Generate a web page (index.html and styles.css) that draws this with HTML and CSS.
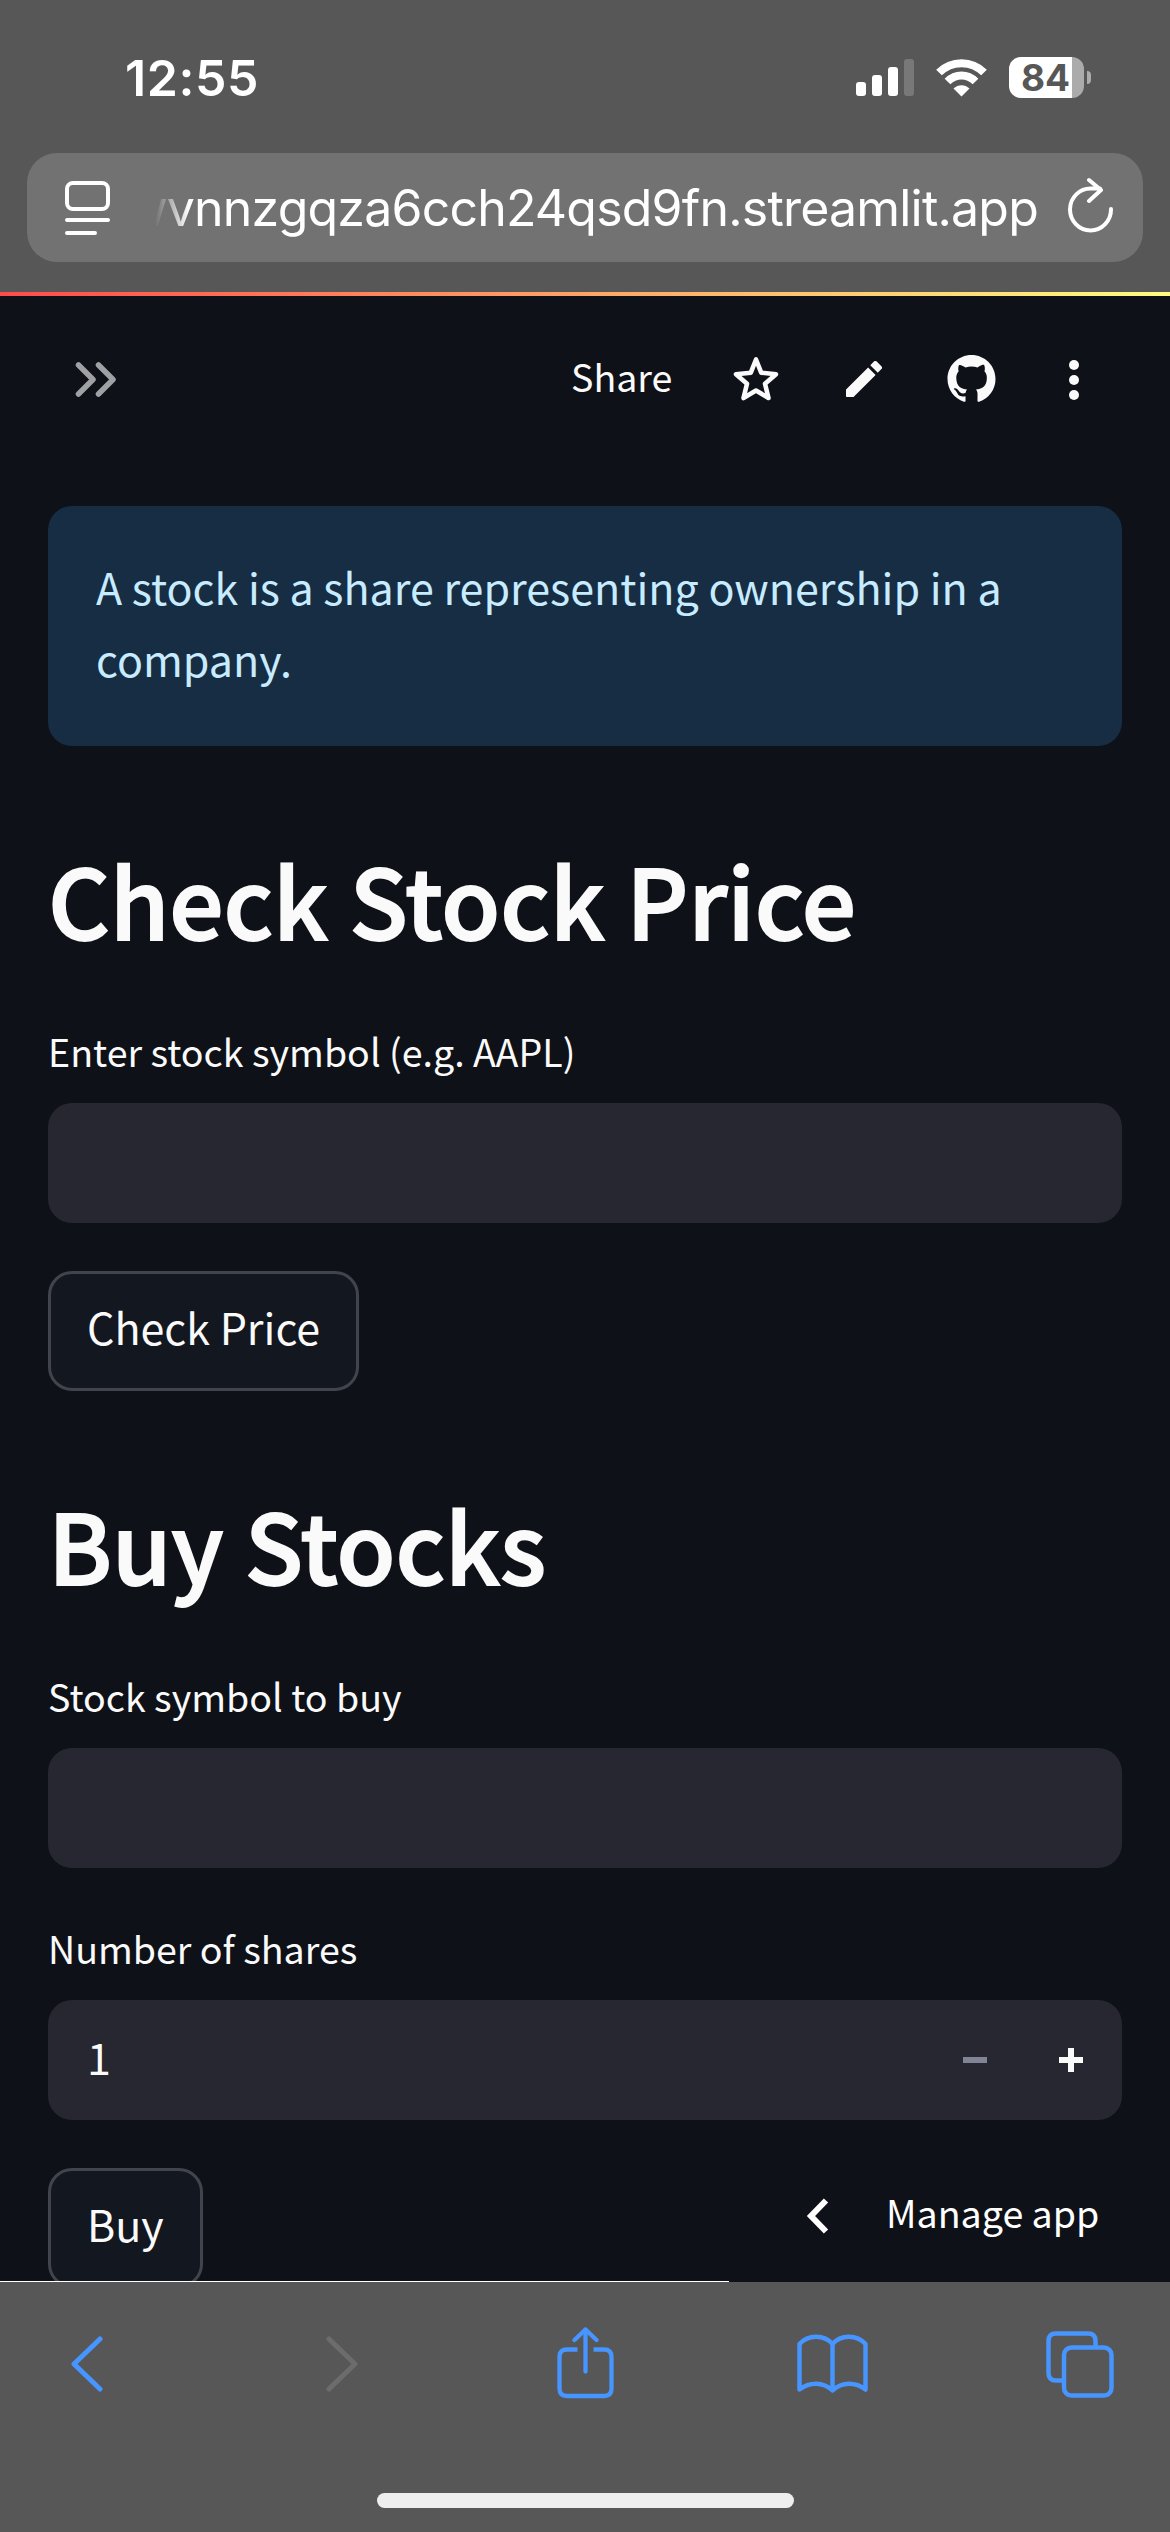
FILE: index.html
```html
<!DOCTYPE html>
<html lang="en">
<head>
<meta charset="utf-8">
<title>Stock app</title>
<link rel="stylesheet" href="styles.css">
</head>
<body>
<div class="phone">
  <div class="browser-top">
    <div class="status">
      <span class="time">12:55</span>
      <div class="indicators">
        <svg class="signal" width="58" height="38" viewBox="0 0 58 38" fill="#fff"><rect y="23" width="10" height="14" rx="3"/><rect x="16" y="16" width="10" height="21" rx="3"/><rect x="32" y="8" width="10" height="29" rx="3"/><rect x="48" width="10" height="37" rx="3" opacity=".2"/></svg>
        <svg class="wifi" width="51" height="38" viewBox="0 0 51 38" fill="none" stroke="#fff"><path stroke-width="8" d="M3 13.5C15.500 1 35.500 1 48 13.500"/><path stroke-width="8" d="M11.500 22.500C19.500 14.500 31.500 14.500 39.500 22.500"/><path fill="#fff" stroke="none" d="M17.500 29.500C22 25 29 25 33.500 29.500L25.500 37.500Z"/></svg>
        <div class="battery"><span class="level">84</span></div>
        <span class="battery-tip"></span>
      </div>
    </div>
    <div class="address">
      <svg class="page-icon" width="46" height="56" viewBox="0 0 46 56" fill="none" stroke="#fff" stroke-width="4" stroke-linecap="round"><rect x="2" y="2" width="41" height="26" rx="6"/><path d="M2 39H43M2 52H30"/></svg>
      <div class="url"><span>wvnnzgqza6cch24qsd9fn.streamlit.app</span></div>
      <svg class="reload" width="46" height="56" viewBox="0 0 46 56" fill="none" stroke="#fff" stroke-width="4" stroke-linecap="round" stroke-linejoin="round"><path d="M43 32A20.500 21 0 1 1 23.500 11.500H32M21 3L33 13L21 24"/></svg>
    </div>
  </div>

  <div class="app">
    <div class="decoration"></div>
    <header class="toolbar">
      <svg class="expand" width="42" height="36" viewBox="0 0 42 36" fill="none" stroke="#a0a1a4" stroke-width="5.500" stroke-linecap="round" stroke-linejoin="round"><path d="M3.500 3L18 17.500L3.500 32M23.500 3L38 17.500L23.500 32"/></svg>
      <nav class="actions">
        <span class="share">Share</span>
        <svg class="star" width="48" height="48" viewBox="0 0 48 48" fill="none" stroke="#fafafa" stroke-width="4.600" stroke-linejoin="round"><path d="M24 4.500L29.200 17.700L44 19.300L33 28.700L36.500 43L24 35.500L11.500 43L15 28.700L4 19.300L18.800 17.700Z"/></svg>
        <svg class="pencil" width="36" height="36" viewBox="3 3 18 18" fill="#fafafa"><path d="M3 17.460v3.040c0 .28.220.500.500.500h3.040c.130 0 .26-.050.350-.150L17.810 9.940l-3.750-3.750L3.150 17.100c-.1.100-.15.220-.15.360zM20.710 7.040a.996.996 0 0 0 0-1.410l-2.340-2.340a.996.996 0 0 0-1.410 0l-1.830 1.830 3.750 3.750 1.830-1.830z"/></svg>
        <svg class="github" width="49" height="48" viewBox="0 0 16 16" fill="#fafafa"><path d="M8 0C3.580 0 0 3.580 0 8c0 3.540 2.290 6.530 5.470 7.590.4.070.55-.17.550-.38 0-.19-.01-.82-.01-1.490-2.010.370-2.530-.49-2.690-.94-.09-.23-.48-.94-.82-1.130-.28-.15-.68-.52-.01-.53.630-.01 1.080.580 1.230.820.720 1.210 1.870.870 2.330.660.070-.52.280-.87.510-1.070-1.780-.2-3.640-.89-3.640-3.950 0-.87.310-1.590.820-2.150-.08-.2-.36-1.020.080-2.120 0 0 .67-.21 2.200.820.640-.18 1.320-.27 2-.27s1.360.090 2 .27c1.530-1.040 2.200-.82 2.200-.82.440 1.100.160 1.920.080 2.120.510.560.820 1.270.820 2.150 0 3.070-1.870 3.750-3.650 3.950.290.250.540.730.540 1.480 0 1.070-.01 1.930-.01 2.200 0 .21.150.460.550.380A8.010 8.010 0 0 0 16 8c0-4.420-3.580-8-8-8z"/></svg>
        <svg class="dots" width="10" height="42" viewBox="0 0 10 42" fill="#fafafa"><circle cx="5" cy="6" r="5"/><circle cx="5" cy="21" r="5"/><circle cx="5" cy="36" r="5"/></svg>
      </nav>
    </header>

    <main class="content">
      <p class="info">A stock is a share representing ownership in a company.</p>
      <h1>Check Stock Price</h1>
      <span class="label">Enter stock symbol (e.g. AAPL)</span>
      <div class="field"></div>
      <div class="button check">Check Price</div>
      <h1>Buy Stocks</h1>
      <span class="label">Stock symbol to buy</span>
      <div class="field"></div>
      <span class="label second">Number of shares</span>
      <div class="field number">
        <span class="value">1</span>
        <svg width="24" height="26" viewBox="0 0 24 26" fill="#808495"><path d="M0 10H24V16H0Z"/></svg>
        <svg width="24" height="26" viewBox="0 0 24 26" fill="#fafafa"><path d="M9 1H15V10H24V16H15V25H9V16H0V10H9Z"/></svg>
      </div>
      <div class="button buy">Buy</div>
    </main>
    <div class="load-line"></div>
    <div class="manage">
      <svg width="23" height="36" viewBox="0 0 23 36" fill="none" stroke="#fff" stroke-width="6"><path d="M20 2.500L5 18L20 33.500"/></svg>
      <span class="manage-text">Manage app</span>
    </div>
  </div>

  <footer class="browser-bottom">
    <div class="nav">
      <svg width="32" height="56" viewBox="0 0 32 56" fill="none" stroke="#4795ff" stroke-width="5" stroke-linecap="round" stroke-linejoin="round"><path d="M29 3L3 28L29 53"/></svg>
      <svg class="forward" width="32" height="56" viewBox="0 0 32 56" fill="none" stroke="#6c6c6c" stroke-width="5" stroke-linecap="round" stroke-linejoin="round"><path d="M3 3L29 28L3 53"/></svg>
      <svg class="share-icon" width="57" height="72" viewBox="0 0 57 72" fill="none" stroke="#4795ff" stroke-width="4.300" stroke-linejoin="round"><path d="M20.500 22.500H10Q2.500 22.500 2.500 30V61.500Q2.500 69 10 69H47Q54.500 69 54.500 61.500V30Q54.500 22.500 47 22.500H36.500"/><path stroke-linecap="round" d="M28.500 44.500V2.500M17.500 13L28.500 2.500L39.500 13"/></svg>
      <svg class="book" width="71" height="60" viewBox="0 0 71 60" fill="none" stroke="#4795ff" stroke-width="4.500" stroke-linejoin="round"><path d="M35.500 10C27 0 11 .5 2.500 10V55.500C12 48 26 47 35.500 56.500C45 47 59 48 68.500 55.500V10C60 .5 44 0 35.500 10ZM35.500 10V56.500"/></svg>
      <svg class="tabs" width="68" height="67" viewBox="0 0 68 67" fill="none" stroke="#4795ff" stroke-width="4.500"><path d="M16 49.500H10Q2.500 49.500 2.500 42V10Q2.500 2.500 10 2.500H42Q49.500 2.500 49.500 10V15"/><rect x="18" y="16.500" width="47.500" height="48" rx="7.500"/></svg>
    </div>
    <div class="home-bar"></div>
  </footer>
</div>
</body>
</html>
```
FILE: styles.css
```css
* { box-sizing: border-box; }

body { margin: 0; background: #0e1117; }

svg { display: block; flex: none; }

.phone {
  display: flex;
  flex-direction: column;
  width: 1170px;
  height: 2532px;
  overflow: hidden;
  font-family: "Noto Sans CJK SC", "Noto Sans", sans-serif;
  color: #fafafa;
}

.browser-top {
  height: 292px;
  flex: none;
  background: #575757;
  font-family: Inter, sans-serif;
  color: #fff;
}

.status {
  height: 153px;
  display: flex;
  justify-content: space-between;
  padding: 48px 79px 0 125px;
}

.time {
  font-size: 50px;
  font-weight: 600;
  line-height: 60px;
  letter-spacing: 0.6px;
}

.indicators { display: flex; align-items: flex-start; }
.signal { margin-top: 11px; }
.wifi { margin: 11px 22px 0; }

.battery {
  width: 75px;
  height: 41px;
  margin-top: 9px;
  border-radius: 12px;
  background: linear-gradient(90deg, #fff 63px, #ababab 63px);
}

.level {
  display: block;
  padding-left: 12px;
  font-size: 37px;
  font-weight: 700;
  line-height: 41px;
  letter-spacing: -0.2px;
  color: #575757;
}

.battery-tip {
  width: 4px;
  height: 13px;
  margin: 23px 0 0 3px;
  border-radius: 0 4px 4px 0;
  background: #ababab;
}

.address {
  display: flex;
  align-items: flex-start;
  height: 109px;
  margin: 0 27px;
  padding: 0 29px 0 38px;
  border-radius: 30px;
  background: #727272;
}

.page-icon { margin-top: 28px; }

.url {
  flex: 1;
  display: flex;
  justify-content: flex-end;
  height: 109px;
  margin: 0 30px 0 44px;
  overflow: hidden;
  font-size: 50px;
  line-height: 110px;
  letter-spacing: -0.8px;
  -webkit-mask-image: linear-gradient(90deg, transparent, #000 34px);
  mask-image: linear-gradient(90deg, transparent, #000 34px);
}

.reload { margin-top: 24px; }

.app {
  position: relative;
  height: 1990px;
  flex: none;
  overflow: hidden;
  background: #0e1117;
}

.decoration { height: 4px; background: linear-gradient(90deg, #ff4b4b, #fffd80); }

.toolbar {
  display: flex;
  justify-content: space-between;
  height: 210px;
  padding: 59px 91px 0 75px;
  font-size: 37.6px;
}

.expand { margin-top: 7px; }
.actions { display: flex; align-items: flex-start; }
.share { line-height: 42px; width: 100px; white-space: nowrap; }
.star { margin-left: 61px; }
.pencil { margin: 6px 0 0 66px; }
.github { margin-left: 65px; }
.dots { margin: 4px 0 0 73px; }

.content { display: flex; flex-direction: column; align-items: flex-start; padding: 0 48px; }

.info {
  width: 100%;
  height: 240px;
  margin: 0;
  padding: 44px 48px 0;
  border-radius: 24px;
  background: #172d43;
  color: #c7ebff;
  font-size: 43px;
  line-height: 72px;
}

h1 {
  margin: 93px 0 0;
  font-size: 96px;
  font-weight: 500;
  line-height: 120px;
  letter-spacing: -0.15px;
  white-space: nowrap;
  -webkit-text-stroke: 1.8px #fafafa;
}

.label { margin-top: 62px; font-size: 37.6px; line-height: 60px; }
.second { margin-top: 50px; }

.field {
  width: 100%;
  height: 120px;
  flex: none;
  margin-top: 22px;
  border-radius: 24px;
  background: #262730;
}

.number {
  display: flex;
  align-items: center;
  gap: 72px;
  padding: 0 39px;
}

.value { flex: 1; font-size: 43px; line-height: 112px; height: 120px; }

.button {
  height: 120px;
  flex: none;
  margin-top: 48px;
  padding: 0 36px;
  border: 3px solid #41444c;
  border-radius: 24px;
  background: #131720;
  font-size: 43px;
  line-height: 105px;
  white-space: nowrap;
}

.check { width: 311px; }
.buy { width: 155px; }

.load-line {
  position: absolute;
  left: 0;
  bottom: 0;
  width: 729px;
  height: 1px;
  background: #fff;
}

.manage {
  position: absolute;
  right: 0;
  bottom: 0;
  display: flex;
  align-items: center;
  gap: 57px;
  width: 441px;
  height: 132px;
  padding-left: 77px;
  background: #0e1117;
  color: #fff;
  font-size: 37.6px;
  line-height: 60px;
}

.manage-text { padding-bottom: 8px; }

.browser-bottom { flex: 1; background: #575757; }

.nav {
  display: flex;
  align-items: center;
  height: 211px;
  padding: 0 0 47px 71px;
}

.forward { margin-left: 223px; }
.share-icon { margin-left: 199px; margin-bottom: 2px; }
.book { margin-left: 183px; }
.tabs { margin-left: 178px; }

.home-bar {
  width: 417px;
  height: 15px;
  margin: 0 auto;
  border-radius: 8px;
  background: #eee;
}
```
